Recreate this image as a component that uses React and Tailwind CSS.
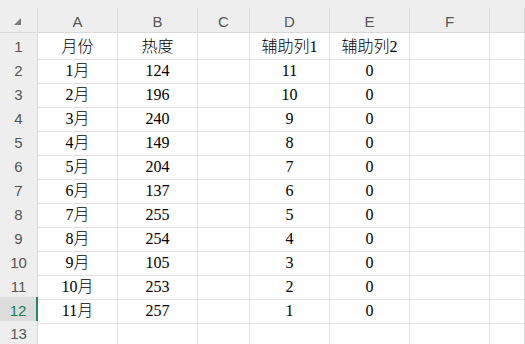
import React from 'react';

const cols = ['A', 'B', 'C', 'D', 'E', 'F', ''];

const rows = [
  ['月份', '热度', '', '辅助列1', '辅助列2'],
  ['1月', '124', '', '11', '0'],
  ['2月', '196', '', '10', '0'],
  ['3月', '240', '', '9', '0'],
  ['4月', '149', '', '8', '0'],
  ['5月', '204', '', '7', '0'],
  ['6月', '137', '', '6', '0'],
  ['7月', '255', '', '5', '0'],
  ['8月', '254', '', '4', '0'],
  ['9月', '105', '', '3', '0'],
  ['10月', '253', '', '2', '0'],
  ['11月', '257', '', '1', '0'],
  ['', '', '', '', ''],
];

const gridCols = 'grid grid-cols-[38px_80px_80px_52px_80px_80px_80px_1fr]';
const serif = { fontFamily: '"Liberation Serif", "Noto Sans CJK SC", serif' };

const App = () => {
  return (
    <div className="w-[525px] h-[344px] overflow-hidden bg-white font-['Liberation_Sans','Noto_Sans_CJK_SC',sans-serif]">
      <div className="bg-[#eeeeee] pt-2">
        <div className={`${gridCols} h-[25px] border-b border-[#d9d9d9]`}>
          <div className="relative border-r border-[#dcdcdc]">
            <span className="absolute left-[14px] top-[10px] w-0 h-0 border-l-[7px] border-l-transparent border-b-[7px] border-b-[#7a7a7a]" />
          </div>
          {cols.map((c, i) => (
            <div
              key={i}
              className="flex items-center justify-center pt-[3px] border-r border-[#dcdcdc] text-[15px] text-[#555555]"
            >
              {c}
            </div>
          ))}
        </div>
      </div>
      {rows.map((r, ri) => {
        const active = ri === 11;
        return (
          <div key={ri} className={`${gridCols} h-[24px]`}>
            <div
              className={`flex items-center justify-center pt-[2px] border-b border-[#dcdcdc] text-[15px] ${
                active
                  ? 'bg-[#dcdcdc] text-[#1a7a55] border-r-2 border-r-[#1f8a5f]'
                  : 'bg-[#eeeeee] text-[#555555] border-r border-r-[#d9d9d9]'
              }`}
            >
              {ri + 1}
            </div>
            {[...r, '', ''].map((v, ci) => (
              <div
                key={ci}
                style={serif}
                className="flex items-center justify-center pt-[2px] border-r border-b border-[#e1e1e1] text-[16px] font-light text-black"
              >
                {v}
              </div>
            ))}
          </div>
        );
      })}
    </div>
  );
};

export default App;
